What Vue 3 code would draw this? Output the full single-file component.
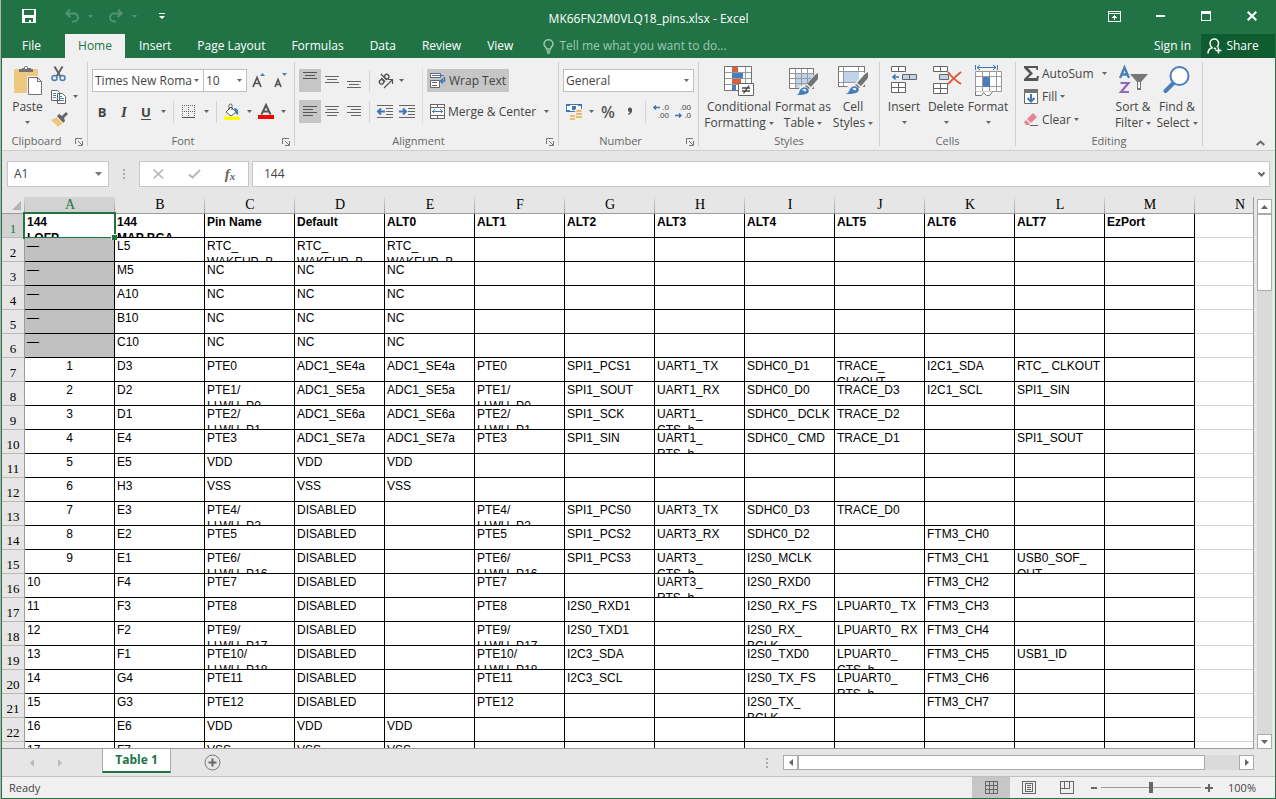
<script setup>
import { ref } from 'vue'

const tabs = ['Insert', 'Page Layout', 'Formulas', 'Data', 'Review', 'View']
const letters = 'ABCDEFGHIJKLMN'.split('')
const fontName = ref('Times New Roma')
const fontSize = ref('10')
const numberFormat = ref('General')
const cellName = ref('A1')
const formula = ref('144')
const zoom = ref(50)

const rows = [
  ['144\nLQFP', '144\nMAP BGA', 'Pin Name', 'Default', 'ALT0', 'ALT1', 'ALT2', 'ALT3', 'ALT4', 'ALT5', 'ALT6', 'ALT7', 'EzPort'],
  ['—', 'L5', 'RTC_\nWAKEUP_B', 'RTC_\nWAKEUP_B', 'RTC_\nWAKEUP_B'],
  ['—', 'M5', 'NC', 'NC', 'NC'],
  ['—', 'A10', 'NC', 'NC', 'NC'],
  ['—', 'B10', 'NC', 'NC', 'NC'],
  ['—', 'C10', 'NC', 'NC', 'NC'],
  ['1', 'D3', 'PTE0', 'ADC1_SE4a', 'ADC1_SE4a', 'PTE0', 'SPI1_PCS1', 'UART1_TX', 'SDHC0_D1', 'TRACE_\nCLKOUT', 'I2C1_SDA', 'RTC_ CLKOUT'],
  ['2', 'D2', 'PTE1/\nLLWU_P0', 'ADC1_SE5a', 'ADC1_SE5a', 'PTE1/\nLLWU_P0', 'SPI1_SOUT', 'UART1_RX', 'SDHC0_D0', 'TRACE_D3', 'I2C1_SCL', 'SPI1_SIN'],
  ['3', 'D1', 'PTE2/\nLLWU_P1', 'ADC1_SE6a', 'ADC1_SE6a', 'PTE2/\nLLWU_P1', 'SPI1_SCK', 'UART1_\nCTS_b', 'SDHC0_ DCLK', 'TRACE_D2'],
  ['4', 'E4', 'PTE3', 'ADC1_SE7a', 'ADC1_SE7a', 'PTE3', 'SPI1_SIN', 'UART1_\nRTS_b', 'SDHC0_ CMD', 'TRACE_D1', '', 'SPI1_SOUT'],
  ['5', 'E5', 'VDD', 'VDD', 'VDD'],
  ['6', 'H3', 'VSS', 'VSS', 'VSS'],
  ['7', 'E3', 'PTE4/\nLLWU_P2', 'DISABLED', '', 'PTE4/\nLLWU_P2', 'SPI1_PCS0', 'UART3_TX', 'SDHC0_D3', 'TRACE_D0'],
  ['8', 'E2', 'PTE5', 'DISABLED', '', 'PTE5', 'SPI1_PCS2', 'UART3_RX', 'SDHC0_D2', '', 'FTM3_CH0'],
  ['9', 'E1', 'PTE6/\nLLWU_P16', 'DISABLED', '', 'PTE6/\nLLWU_P16', 'SPI1_PCS3', 'UART3_\nCTS_b', 'I2S0_MCLK', '', 'FTM3_CH1', 'USB0_SOF_\nOUT'],
  ['10', 'F4', 'PTE7', 'DISABLED', '', 'PTE7', '', 'UART3_\nRTS_b', 'I2S0_RXD0', '', 'FTM3_CH2'],
  ['11', 'F3', 'PTE8', 'DISABLED', '', 'PTE8', 'I2S0_RXD1', '', 'I2S0_RX_FS', 'LPUART0_ TX', 'FTM3_CH3'],
  ['12', 'F2', 'PTE9/\nLLWU_P17', 'DISABLED', '', 'PTE9/\nLLWU_P17', 'I2S0_TXD1', '', 'I2S0_RX_\nBCLK', 'LPUART0_ RX', 'FTM3_CH4'],
  ['13', 'F1', 'PTE10/\nLLWU_P18', 'DISABLED', '', 'PTE10/\nLLWU_P18', 'I2C3_SDA', '', 'I2S0_TXD0', 'LPUART0_\nCTS_b', 'FTM3_CH5', 'USB1_ID'],
  ['14', 'G4', 'PTE11', 'DISABLED', '', 'PTE11', 'I2C3_SCL', '', 'I2S0_TX_FS', 'LPUART0_\nRTS_b', 'FTM3_CH6'],
  ['15', 'G3', 'PTE12', 'DISABLED', '', 'PTE12', '', '', 'I2S0_TX_\nBCLK', '', 'FTM3_CH7'],
  ['16', 'E6', 'VDD', 'VDD', 'VDD'],
  ['17', 'F7', 'VSS', 'VSS', 'VSS'],
]

function cellClass(r, c) {
  return {
    bold: r === 0,
    dim: c === 0 && r > 0 && r < 6,
    mid: c === 0 && r > 5 && r < 15,
    active: c === 0 && r === 0,
    plain: c === 13,
  }
}
</script>

<template>
  <div class="window">
    <header class="title">
      <div class="quick">
        <button class="q save" aria-label="Save">
          <svg width="14" height="14" shape-rendering="crispEdges"><path fill="#fff" fill-rule="evenodd" d="M0 0h14v14H0zM2 1h10v5H2zM3 9h8v4H9v-2H7v2H3z" /></svg>
        </button>
        <button class="q undo" aria-label="Undo">
          <svg width="14" height="14" fill="none" stroke="#529472" stroke-width="2"><path d="M5 .5L1.300 4.500 5.500 8M2 4.500h7a4 4 0 0 1 0 8H7" /></svg>
          <svg class="tri" width="5" height="3"><path fill="#529472" d="M0 0h5L2.500 3z" /></svg>
        </button>
        <button class="q redo" aria-label="Redo">
          <svg width="14" height="14" fill="none" stroke="#529472" stroke-width="2"><path d="M9 .5l3.700 4L8.500 8M12 4.500H5a4 4 0 0 0 0 8h2" /></svg>
          <svg class="tri" width="5" height="3"><path fill="#529472" d="M0 0h5L2.500 3z" /></svg>
        </button>
        <button class="q" aria-label="Customize Quick Access Toolbar">
          <svg width="6" height="7"><path fill="#fff" d="M0 0h6v1H0zM0 3h6L3 6z" /></svg>
        </button>
      </div>
      <h1>MK66FN2M0VLQ18_pins.xlsx - Excel</h1>
      <div class="winbtns">
        <button aria-label="Ribbon Display Options"><svg width="13" height="11" shape-rendering="crispEdges"><path fill="none" stroke="#fff" d="M.5.5h12v10H.5zM.5 2.500h12" /><path fill="#fff" d="M6 4h1v1h1v1h1v1H7v2H6V7H4V6h1V5h1z" /></svg></button>
        <button aria-label="Minimize"><svg width="9" height="2"><path fill="#fff" d="M0 0h9v2H0z" /></svg></button>
        <button aria-label="Maximize"><svg width="10" height="10" shape-rendering="crispEdges"><path fill="#fff" fill-rule="evenodd" d="M0 0h10v10H0zM1 3h8v6H1z" /></svg></button>
        <button aria-label="Close"><svg width="10" height="10"><path stroke="#fff" stroke-width="2" d="M.7.7l8.600 8.600M9.300.7L.7 9.300" /></svg></button>
      </div>
    </header>

    <nav class="tabs">
      <button class="file">File</button>
      <button class="home">Home</button>
      <button v-for="t in tabs" :key="t" class="tab">{{ t }}</button>
      <button class="tell">
        <svg width="11" height="15" fill="none" stroke="#9fc7b1" stroke-width="1.500"><path d="M3.500 10C3.500 8 1 7.500 1 5a4.500 4.300 0 0 1 9 0c0 2.500-2.500 3-2.500 5zM3.500 12h4M4 14h3" /></svg>
        Tell me what you want to do...
      </button>
      <span class="grow"></span>
      <button class="sign">Sign in</button>
      <button class="share">
        <svg width="15" height="16" fill="none" stroke="#fff" stroke-width="1.500"><path d="M1 15.500c0-3 1.500-5 4-5.700C3.500 8.500 3 7 3 5.300a4.300 4.300 0 0 1 8.600 0c0 1.700-.6 3-1.600 4M7 10l2 1M11.500 9.500v6M8.500 12.500h6" /></svg>
        Share
      </button>
    </nav>

    <section class="ribbon">
      <div class="group clip">
        <div class="body">
          <button class="big paste">
            <svg width="30" height="32">
              <path fill="#edc87e" d="M1 4h24v24H1z" /><path fill="#f0f0f0" d="M14 11h16v20H14z" />
              <path fill="#737373" d="M6 4h3V3h2a2 2 0 0 1 4 0h3v1h2v3H6z" /><path fill="#f0f0f0" d="M12 2h2v2h-2z" />
              <path fill="#fff" stroke="#737373" d="M15.500 12.500h9l4 4v13h-13zM24.500 12.500v4h4" />
            </svg>
            <span>Paste</span><svg class="tri" width="5" height="3"><path d="M0 0h5L2.500 3z" /></svg>
          </button>
          <div class="stack">
            <button aria-label="Cut"><svg width="16" height="16" fill="none"><path stroke="#636363" stroke-width="2" d="M3.500.5l6 10M11.500.5l-6 10" /><circle cx="3.500" cy="12" r="2.500" stroke="#4a7ebb" stroke-width="1.500" /><circle cx="11.500" cy="12" r="2.500" stroke="#4a7ebb" stroke-width="1.500" /></svg></button>
            <button aria-label="Copy"><svg width="16" height="14"><path fill="#fff" stroke="#666" d="M.5.5h6l2 2v8h-8zM6.500 3.500h5l3 3v7h-8z" /><path stroke="#4a7ebb" d="M2 3.500h3M2 5.500h3M2 7.500h3M8 6.500h3M8 8.500h5M8 10.500h5" /></svg><svg class="tri" width="5" height="3"><path d="M0 0h5L2.500 3z" /></svg></button>
            <button aria-label="Format Painter"><svg width="17" height="15"><path fill="#edc87e" d="M0 8l6-3 6 6-5 4z" /><path fill="#666" d="M6 4l2-2 3 2 4-4 2 2-4 4 1 3-2 2z" /><path stroke="#f0f0f0" d="M6 5l6 6" /></svg></button>
          </div>
        </div>
        <h2>Clipboard</h2>
        <button class="launch" aria-label="Clipboard settings"><svg width="8" height="8"><path fill="none" stroke="#777" d="M.5 6V.5H7M3 3l4 4M7.500 3v4.500H3" /></svg></button>
      </div>

      <div class="group font">
        <div class="body rows2">
          <div class="line">
            <span class="sel fname"><select v-model="fontName" aria-label="Font"><option>Times New Roma</option></select><svg class="tri" width="5" height="3"><path d="M0 0h5L2.500 3z" /></svg></span>
            <span class="sel fsize"><select v-model="fontSize" aria-label="Font size"><option>10</option></select><svg class="tri" width="5" height="3"><path d="M0 0h5L2.500 3z" /></svg></span>
            <button class="ib" aria-label="Increase font size"><svg width="13" height="15"><path fill="none" stroke="#555" stroke-width="1.700" d="M1 14L5 4.500 9 14M2.500 10.500h5" /><path fill="#4a7ebb" d="M8 3h5L10.500 0z" /></svg></button>
            <button class="ib" aria-label="Decrease font size"><svg width="13" height="15"><path fill="none" stroke="#555" stroke-width="1.600" d="M1 14l3-7.500L7 14M2 11.500h4" /><path fill="#4a7ebb" d="M8 0h5L10.500 3z" /></svg></button>
          </div>
          <div class="line">
            <button class="ib b">B</button><button class="ib i">I</button><button class="ib u">U</button>
            <button class="ar" aria-label="Underline styles"><svg class="tri" width="5" height="3"><path d="M0 0h5L2.500 3z" /></svg></button>
            <i class="sep"></i>
            <button class="ib" aria-label="Borders"><svg width="14" height="13" shape-rendering="crispEdges"><path fill="none" stroke="#666" stroke-dasharray="1 1" d="M0 .5h13M0 6.500h13M.5 0v12M6.500 0v12M12.500 0v12" /><path stroke="#555" d="M0 12.500h13" /></svg></button>
            <button class="ar" aria-label="Border styles"><svg class="tri" width="5" height="3"><path d="M0 0h5L2.500 3z" /></svg></button>
            <i class="sep"></i>
            <button class="ib" aria-label="Fill colour"><svg width="16" height="16"><path fill="#fff" stroke="#555" d="M2 8l5-5 5 5-5 4zM5 6V1.500a1.500 1.500 0 0 1 3 0V6" /><path fill="#4a7ebb" d="M10 4c4 0 5 3 4 7-2-1-3-2-3-3z" /><path fill="#ff0" d="M0 12.500h16V16H0z" /></svg></button>
            <button class="ar" aria-label="Fill colours"><svg class="tri" width="5" height="3"><path d="M0 0h5L2.500 3z" /></svg></button>
            <button class="ib" aria-label="Font colour"><svg width="16" height="15"><path fill="none" stroke="#555" stroke-width="2" d="M3.500 10.500L8 1l4.500 9.500M5 7.500h6" /><path fill="#f00" d="M0 11h16v4H0z" /></svg></button>
            <button class="ar" aria-label="Font colours"><svg class="tri" width="5" height="3"><path d="M0 0h5L2.500 3z" /></svg></button>
          </div>
        </div>
        <h2>Font</h2>
        <button class="launch" aria-label="Font settings"><svg width="8" height="8"><path fill="none" stroke="#777" d="M.5 6V.5H7M3 3l4 4M7.500 3v4.500H3" /></svg></button>
      </div>

      <div class="group align">
        <div class="body cols">
          <div class="rows2 left">
            <div class="line">
              <button class="ib on" aria-label="Top align"><svg width="14" height="17"><path stroke="#555" d="M0 .5h14M2 3.500h10M0 6.500h14" /></svg></button>
              <button class="ib" aria-label="Middle align"><svg width="14" height="17"><path stroke="#666" d="M0 4.500h14M2 7.500h10M0 10.500h14" /></svg></button>
              <button class="ib" aria-label="Bottom align"><svg width="14" height="17"><path stroke="#666" d="M0 9.500h14M2 12.500h10M0 15.500h14" /></svg></button>
              <i class="sep"></i>
              <button class="ib" aria-label="Orientation"><svg width="16" height="16" fill="none" stroke="#555" stroke-width="1.400"><g transform="rotate(-45 6 6)"><circle cx="3" cy="7" r="2.200" /><path d="M5.500 4v5.500M8 1v8.500" /><circle cx="10.300" cy="7" r="2.200" /></g><path stroke-width="1.200" d="M7 15l8-8M11 6.500h4.500V11" /></svg></button>
              <button class="ar" aria-label="Orientation options"><svg class="tri" width="5" height="3"><path d="M0 0h5L2.500 3z" /></svg></button>
            </div>
            <div class="line">
              <button class="ib on" aria-label="Align left"><svg width="14" height="13"><path stroke="#555" d="M0 1.500h14M0 4.500h10M0 7.500h14M0 10.500h10" /></svg></button>
              <button class="ib" aria-label="Center"><svg width="14" height="13"><path stroke="#666" d="M0 1.500h14M2 4.500h10M0 7.500h14M2 10.500h10" /></svg></button>
              <button class="ib" aria-label="Align right"><svg width="14" height="13"><path stroke="#666" d="M0 1.500h14M4 4.500h10M0 7.500h14M4 10.500h10" /></svg></button>
              <i class="sep"></i>
              <button class="ib" aria-label="Decrease indent"><svg width="16" height="13"><path stroke="#666" d="M0 .5h16M9 3.500h7M9 6.500h7M9 9.500h7M0 12.500h16" /><path fill="none" stroke="#3f77b5" stroke-width="2" d="M1 6.500h7M4 3.500l-3 3 3 3" /></svg></button>
              <button class="ib" aria-label="Increase indent"><svg width="16" height="13"><path stroke="#666" d="M0 .5h16M9 3.500h7M9 6.500h7M9 9.500h7M0 12.500h16" /><path fill="none" stroke="#3f77b5" stroke-width="2" d="M0 6.500h7M4 3.500l3 3-3 3" /></svg></button>
            </div>
          </div>
          <i class="tall"></i>
          <div class="rows2">
            <button class="wide on"><svg width="16" height="16"><path fill="#fff" stroke="#666" d="M.5.5h10v4H.5zM.5 7.500h9v7h-9z" /><path stroke="#3f77b5" d="M2 2.500h12" /><path stroke="#666" d="M2 9.500h5M2 12.500h5" /><path stroke="#3f77b5" d="M2 9.500h3" /><path fill="none" stroke="#3f77b5" stroke-width="1.500" d="M14.500 4v4H11M13 5.500L10.500 8l2.500 2.500" /></svg>Wrap Text</button>
            <button class="wide"><svg width="15" height="15" shape-rendering="crispEdges"><path fill="#fff" stroke="#666" d="M.5.5h14v14H.5zM.5 3.500h14M.5 11.500h14M7.500.5v3M7.500 11.500v3" /><path stroke="#3f77b5" fill="none" d="M2 7.500h11M4.500 5.500l-2 2 2 2M10.500 5.500l2 2-2 2" /></svg>Merge &amp; Center<svg class="tri far" width="5" height="3"><path d="M0 0h5L2.500 3z" /></svg></button>
          </div>
        </div>
        <h2>Alignment</h2>
        <button class="launch" aria-label="Alignment settings"><svg width="8" height="8"><path fill="none" stroke="#777" d="M.5 6V.5H7M3 3l4 4M7.500 3v4.500H3" /></svg></button>
      </div>

      <div class="group number">
        <div class="body rows2">
          <div class="line">
            <span class="sel nfmt"><select v-model="numberFormat" aria-label="Number format"><option>General</option></select><svg class="tri" width="5" height="3"><path d="M0 0h5L2.500 3z" /></svg></span>
          </div>
          <div class="line">
            <button class="ib" aria-label="Accounting format"><svg width="17" height="17"><path fill="#fff" stroke="#3f77b5" d="M.5 1.500h15v7H.5z" /><path fill="#3f77b5" d="M0 1h4v2H0zM12 1h4v2h-4zM6 3h4v4H6zM0 7h4v2H0z" /><path fill="#f0f0f0" d="M9 6h8v10H9zM3 10h8v7H3z" /><ellipse cx="13" cy="8" rx="3" ry="1.300" fill="#e9bd72" /><path stroke="#e9bd72" stroke-width="2" d="M10 11h6M10 14h6M4 13h5M4 16h5" /></svg></button>
            <button class="ar" aria-label="Accounting options"><svg class="tri" width="5" height="3"><path d="M0 0h5L2.500 3z" /></svg></button>
            <button class="ib pct">%</button>
            <button class="ib" aria-label="Comma style"><svg width="6" height="9"><path fill="#555" d="M1 3a2 2 0 0 1 4-1c.5 3-.8 5-3.500 6l-.5-1c1-.5 1.700-1 1.700-2C1.700 5 1 4 1 3z" /></svg></button>
            <i class="sep"></i>
            <button class="ib dec" aria-label="Increase decimal"><svg class="a1" width="7" height="5"><path fill="none" stroke="#3f77b5" stroke-width="1.500" d="M1 2.500h6M3 .5l-2 2 2 2" /></svg><span class="d1">.0</span><span class="d2">.00</span></button>
            <button class="ib dec" aria-label="Decrease decimal"><svg class="a2" width="7" height="5"><path fill="none" stroke="#3f77b5" stroke-width="1.500" d="M0 2.500h6M4 .5l2 2-2 2" /></svg><span class="d1">.00</span><span class="d2">.0</span></button>
          </div>
        </div>
        <h2>Number</h2>
        <button class="launch" aria-label="Number settings"><svg width="8" height="8"><path fill="none" stroke="#777" d="M.5 6V.5H7M3 3l4 4M7.500 3v4.500H3" /></svg></button>
      </div>

      <div class="group styles">
        <div class="body cols">
          <button class="big w72">
            <svg width="30" height="32"><path fill="#fff" stroke="#999" d="M.5 1.500h27v24H.5zM.5 7.500h27M.5 13.500h27M.5 19.500h27M8.500 1.500v24M21.500 1.500v24" /><path fill="none" stroke="#737373" d="M.5 1.500h27v24H.5z" /><path fill="#d9603b" d="M8 2h6v5H8zM8 14h9v5H8z" /><path fill="#4a7ebb" d="M8 8h11v5H8zM8 20h4v5H8z" /><path fill="#fff" stroke="#666" d="M14.500 18.500h15v12h-15z" /><path fill="none" stroke="#444" stroke-width="1.300" d="M18 23h8M18 26h8M25 20.500l-5.500 8" /></svg>
            <span>Conditional</span><span>Formatting<svg class="tri" width="5" height="3"><path d="M0 0h5L2.500 3z" /></svg></span>
          </button>
          <button class="big w56">
            <svg width="30" height="32"><path fill="#fff" stroke="#999" d="M1.500 3.500h24v20h-24z" /><path fill="#bfd2ea" d="M8 9h17v14H8z" /><path fill="none" stroke="#999" d="M1.500 8.500h24M1.500 13.500h24M1.500 18.500h24M7.500 3.500v20M13.500 3.500v20M19.500 3.500v20" /><path fill="none" stroke="#777" d="M1.500 3.500h24v20h-24z" /><path fill="#f0f0f0" d="M30 7v10L18 30H9l3-9 7-2L28 7z" /><path fill="#737373" d="M30 8v6l-7 8-4-3 8-9zM18 20l4 3-1 1-4-3z" /><path fill="#4a7ebb" d="M8 30c3 0 3-3 4-5s4-4 7-2 2 5-1 6-6 1-10 1z" /><path fill="#fff" d="M14 25c2-2 5-1 4 1-1 1-2-1-4-1z" /></svg>
            <span>Format as</span><span>Table<svg class="tri" width="5" height="3"><path d="M0 0h5L2.500 3z" /></svg></span>
          </button>
          <button class="big w44">
            <svg width="30" height="32"><path fill="#fff" stroke="#777" d="M.5 1.500h26v20H.5z" /><path fill="none" stroke="#999" d="M.5 6.500h26M.5 17.500h26M5.500 1.500v20M20.500 1.500v20" /><path fill="#bfd2ea" d="M6 7h15v10H6z" /><path fill="none" stroke="#777" d="M.5 1.500h26v20H.5z" /><path fill="#f0f0f0" d="M30 6v10L18 29H7l3-9 7-2L28 6z" /><path fill="#737373" d="M30 7v6l-7 8-4-3 8-9zM18 19l4 3-1 1-4-3z" /><path fill="#4a7ebb" d="M7 29c3 0 4-3 5-5s4-4 7-2 2 5-1 6-7 1-11 1z" /><path fill="#fff" d="M14 24c2-2 5-1 4 1-1 1-2-1-4-1z" /></svg>
            <span>Cell</span><span>Styles<svg class="tri" width="5" height="3"><path d="M0 0h5L2.500 3z" /></svg></span>
          </button>
        </div>
        <h2>Styles</h2>
      </div>

      <div class="group cells">
        <div class="body cols">
          <button class="big w40">
            <svg width="28" height="32"><path fill="#fff" stroke="#666" d="M1.500 1.500h14v5h-14zM8.500 1.500v5M1.500 17.500h14v10h-14zM8.500 17.500v10M1.500 22.500h14" /><path fill="#bfd2ea" stroke="#666" d="M12.500 9.500h14v5h-14zM19.500 9.500v5" /><path fill="none" stroke="#3f77b5" stroke-width="1.600" d="M3 12h6M5.500 9.500L3 12l2.500 2.500" /></svg>
            <span>Insert</span><svg class="tri" width="5" height="3"><path d="M0 0h5L2.500 3z" /></svg>
          </button>
          <button class="big w44">
            <svg width="30" height="32"><path fill="#fff" stroke="#666" d="M2.500 1.500h14v5h-14zM9.500 1.500v5M2.500 18.500h14v10h-14zM9.500 18.500v10M2.500 23.500h14" /><path fill="#bfd2ea" stroke="#666" d="M8.500 9.500h9v5h-9z" /><path fill="none" stroke="#d9603b" stroke-width="2" d="M17 7c3 4 8 9 13 12M30 7c-5 4-9 8-13 12" /></svg>
            <span>Delete</span><svg class="tri" width="5" height="3"><path d="M0 0h5L2.500 3z" /></svg>
          </button>
          <button class="big w40">
            <svg width="30" height="32"><path fill="none" stroke="#3f77b5" d="M2.500 0v5M24.500 0v5M4 2.500h19M7 0L4 2.500 7 5M20 0l3 2.500L20 5" /><path fill="#fff" stroke="#999" d="M2.500 6.500h26v20h-26zM2.500 11.500h26M2.500 21.500h26M9.500 6.500v20M16.500 6.500v20M23.500 6.500v20" /><path fill="#4a7ebb" d="M10 12h7v10h-7z" /><path fill="#fff" stroke="#777" d="M2.500 26.500v4h6l2-3 3 3h3l3-4" /></svg>
            <span>Format</span><svg class="tri" width="5" height="3"><path d="M0 0h5L2.500 3z" /></svg>
          </button>
        </div>
        <h2>Cells</h2>
      </div>

      <div class="group editing">
        <div class="body cols">
          <div class="stack edit">
            <button><svg width="15" height="15"><path fill="#555" d="M0 0h14v4h-1.500L12 2H4l5 5.500L4 12h8.500l.5-2H15l-1 5H0v-2l5.500-5.500L0 2z" /></svg>AutoSum<svg class="tri far" width="5" height="3"><path d="M0 0h5L2.500 3z" /></svg></button>
            <button><svg width="15" height="15"><path fill="#fff" stroke="#666" d="M.5.5h13v14H.5z" /><path fill="#737373" d="M0 0h14v4H0z" /><path fill="none" stroke="#3f77b5" stroke-width="2" d="M7 5v7M3.500 9L7 12.500 10.500 9" /></svg>Fill<svg class="tri" width="5" height="3"><path d="M0 0h5L2.500 3z" /></svg></button>
            <button><svg width="15" height="15"><path fill="#e8829a" d="M9 1l4 4-6 6-4-4zM2 8l4 4-1 1H2L0 10z" /><path stroke="#666" d="M6 13.500h8" /></svg>Clear<svg class="tri" width="5" height="3"><path d="M0 0h5L2.500 3z" /></svg></button>
          </div>
          <button class="big w44">
            <svg width="30" height="32" fill="none"><path stroke="#4a7ebb" stroke-width="2.300" d="M2 13L6.500 2.500 11 13M4 9.500h5.500" /><path stroke="#9265b5" stroke-width="2.200" d="M2.500 18h8L3 27h8" /><path fill="#777" d="M12 9h18l-7 8v8h-4v-8z" /><path fill="#fff" d="M20 17h2v6h-2z" /></svg>
            <span>Sort &amp;</span><span>Filter<svg class="tri" width="5" height="3"><path d="M0 0h5L2.500 3z" /></svg></span>
          </button>
          <button class="big w44">
            <svg width="30" height="32"><path stroke="#4a7ebb" stroke-width="4" stroke-linecap="round" d="M3.500 26l8-8" /><circle cx="17.500" cy="11" r="9" fill="#fff" stroke="#4a7ebb" stroke-width="2" /></svg>
            <span>Find &amp;</span><span>Select<svg class="tri" width="5" height="3"><path d="M0 0h5L2.500 3z" /></svg></span>
          </button>
        </div>
        <h2>Editing</h2>
      </div>
      <button class="collapse" aria-label="Collapse the Ribbon"><svg width="9" height="6"><path fill="none" stroke="#666" stroke-width="2" d="M.7 5l3.800-3.500L8.300 5" /></svg></button>
    </section>

    <section class="fbar">
      <div class="namebox"><input v-model="cellName" aria-label="Name box" /><svg width="7" height="4"><path fill="#777" d="M0 0h7L3.500 4z" /></svg></div>
      <svg class="dots" width="2" height="10"><path fill="#aaa" d="M0 0h2v2H0zM0 4h2v2H0zM0 8h2v2H0z" /></svg>
      <div class="fxbox">
        <button aria-label="Cancel"><svg width="11" height="10"><path stroke="#bbb" stroke-width="1.700" d="M.7.7l9.300 8.600M10 .7L.7 9.300" /></svg></button>
        <button aria-label="Enter"><svg width="13" height="10"><path fill="none" stroke="#bbb" stroke-width="2.200" d="M1 5.500l3.500 3L12 1" /></svg></button>
        <button class="fx" aria-label="Insert function">f<small>x</small></button>
      </div>
      <div class="formula"><input v-model="formula" aria-label="Formula bar" /><svg width="7" height="5"><path fill="none" stroke="#666" stroke-width="2" d="M.5.5l3 3 3-3" /></svg></div>
    </section>

    <main class="sheet">
      <div class="grid">
        <table>
          <colgroup><col class="rowcol" /><col v-for="n in 13" :key="n" class="datacol" /><col /></colgroup>
          <thead>
            <tr>
              <th class="corner"><svg width="9" height="9"><path fill="#b4b4b4" d="M9 0v9H0z" /></svg></th>
              <th v-for="(l, c) in letters" :key="l" scope="col" :class="{ cur: c === 0, last: c === 13 }">{{ l }}</th>
            </tr>
          </thead>
          <tbody>
            <tr v-for="(row, r) in rows" :key="r">
              <th scope="row" :class="{ cur: r === 0 }">{{ r + 1 }}</th>
              <td v-for="(l, c) in letters" :key="l" :class="cellClass(r, c)"><div>{{ row[c] }}</div><i v-if="!r && !c" class="handle"></i></td>
            </tr>
          </tbody>
        </table>
      </div>
      <div class="vscroll">
        <button aria-label="Scroll up"><svg width="7" height="4"><path fill="#666" d="M0 4h7L3.500 0z" /></svg></button>
        <div class="vthumb"></div>
        <span class="grow"></span>
        <button aria-label="Scroll down"><svg width="7" height="4"><path fill="#666" d="M0 0h7L3.500 4z" /></svg></button>
      </div>
    </main>

    <section class="sheets">
      <button class="nav" aria-label="Previous sheet"><svg width="4" height="8"><path fill="#bbb" d="M4 0v8L0 4z" /></svg></button>
      <button class="nav" aria-label="Next sheet"><svg width="4" height="8"><path fill="#bbb" d="M0 0v8l4-4z" /></svg></button>
      <button class="sheettab">Table 1</button>
      <button class="add" aria-label="New sheet"><svg width="17" height="17"><circle cx="8.500" cy="8.500" r="7.500" fill="none" stroke="#777" /><path stroke="#666" stroke-width="2" d="M4.500 8.500h8M8.500 4.500v8" /></svg></button>
      <span class="grow"></span>
      <svg class="hdots" width="2" height="10"><path fill="#aaa" d="M0 0h2v2H0zM0 4h2v2H0zM0 8h2v2H0z" /></svg>
      <div class="hscroll">
        <button aria-label="Scroll left"><svg width="4" height="7"><path fill="#666" d="M4 0v7L0 3.500z" /></svg></button>
        <div class="hthumb"></div>
        <span class="grow"></span>
        <button aria-label="Scroll right"><svg width="4" height="7"><path fill="#666" d="M0 0v7l4-3.500z" /></svg></button>
      </div>
    </section>

    <footer class="status">
      <span>Ready</span>
      <span class="grow"></span>
      <button class="view on" aria-label="Normal"><svg width="13" height="13" shape-rendering="crispEdges"><path fill="none" stroke="#666" d="M.5.5h12v12H.5zM.5 4.500h12M.5 8.500h12M4.500.5v12M8.500.5v12" /></svg></button>
      <button class="view" aria-label="Page Layout view"><svg width="14" height="13" shape-rendering="crispEdges"><path fill="none" stroke="#666" d="M.5.5h13v12H.5zM3.500 2.500h7v8h-7zM5 4.500h4M5 6.500h4M5 8.500h4" /></svg></button>
      <button class="view" aria-label="Page Break preview"><svg width="14" height="13" shape-rendering="crispEdges"><path fill="none" stroke="#666" d="M.5.5h13v12H.5zM4.500.5v7h5v-7M.5 7.500h4" /></svg></button>
      <button class="zb" aria-label="Zoom out"><svg width="6" height="2"><path fill="#666" d="M0 0h6v2H0z" /></svg></button>
      <input v-model="zoom" class="slider" type="range" min="0" max="100" aria-label="Zoom" />
      <button class="zb" aria-label="Zoom in"><svg width="8" height="8"><path fill="#666" d="M3 0h2v3h3v2H5v3H3V5H0V3h3z" /></svg></button>
      <button class="pctz">100%</button>
    </footer>
  </div>
</template>

<style>
body { margin: 0; background: #b4b4b4; overflow: hidden; }
</style>

<style scoped>
* { box-sizing: border-box; }
.window {
  display: flex; flex-direction: column; height: 100vh; margin-left: 1px;
  border: 1px solid #217346; border-top: 0; background: #e6e6e6;
  font: 12px/16px "Open Sans", "Noto Sans", sans-serif; color: #444;
}
button { padding: 0; border: 0; background: none; font: inherit; color: inherit; display: flex; align-items: center; justify-content: center; }
input, select { font: inherit; color: inherit; border: 0; background: none; outline: 0; padding: 0; margin: 0; appearance: none; min-width: 0; }
svg { flex: none; display: block; overflow: visible; }
.tri { fill: #666; }
.grow { flex: 1; }

.title { display: flex; align-items: stretch; height: 34px; background: #217346; color: #fff; position: relative; flex: none; }
.quick { display: flex; flex: 1; padding-left: 20px; }
.q { height: 32px; gap: 9px; }
.q.save { margin-right: 29px; }
.q.undo { margin-right: 16px; }
.q.redo { margin-right: 22px; }
h1 { margin: 0; font-size: 12px; font-weight: 400; line-height: 38px; }
.winbtns { display: flex; flex: 1; justify-content: flex-end; }
.winbtns button { width: 46px; height: 32px; }

.tabs { display: flex; height: 24px; background: #217346; color: #fff; flex: none; }
.file { width: 59px; margin-right: 4px; }
.home { width: 60px; margin-right: 1px; background: #f0f0f0; color: #217346; }
.tab { padding: 0 13px; }
.tell { gap: 5px; margin-left: 17px; color: #9fc7b1; }
.sign { margin-right: 10px; }
.share { width: 74px; gap: 4px; background: #0e5c2f; padding-right: 10px; }

.ribbon { display: flex; flex: none; height: 93px; padding: 4px 0; background: #f0f0f0; border-bottom: 1px solid #cfcfcf; }
.group { display: flex; flex-direction: column; border-right: 1px solid #d0d0d0; height: 84px; position: relative; }
.body { flex: 1; display: flex; }
h2 { margin: 0; font-size: 11px; line-height: 16px; font-weight: 400; text-align: center; color: #666; height: 13px; }
.launch { position: absolute; right: 4px; bottom: 0; width: 8px; height: 8px; }
.clip { width: 86px; }
.clip h2 { padding-right: 16px; }
.font { width: 207px; }
.font h2, .align h2, .number h2 { padding-right: 16px; }
.align { width: 264px; }
.number { width: 140px; }
.styles { width: 181px; }
.cells { width: 136px; }
.editing { width: 187px; }
.rows2 { display: flex; flex-direction: column; gap: 8px; padding: 7px 0 0 4px; }
.font .rows2 { padding-left: 3px; }
.cols { display: flex; }
.left { width: 127px; }
.line { display: flex; height: 23px; align-items: center; }
.ib { width: 22px; height: 23px; flex: none; }
.on { background: #c6c6c6; }
.ar { width: 10px; height: 23px; flex: none; }
.font .ar, .number .ar { width: 12px; }
.sep { width: 1px; height: 22px; background: #d4d4d4; margin: 0 4px; flex: none; }
.font .sep { margin-left: 4px; }
.tall { width: 1px; height: 56px; margin-top: 6px; background: #dcdcdc; }
.b, .i, .u { font-size: 13px; font-weight: 700; }
.i { font-style: italic; font-family: "Liberation Serif", serif; font-size: 15px; }
.u { text-decoration: underline; text-underline-offset: 2px; }
.pct { font-size: 16px; font-weight: 600; color: #555; }
.sel { display: flex; align-items: center; position: relative; height: 23px; background: #fff; border: 1px solid #c0c0c0; }
.sel select { flex: 1; width: 100%; height: 21px; padding: 0 10px 0 2px; }
.sel .tri { position: absolute; right: 4px; top: 9px; }
.fname { width: 112px; margin-left: 1px; }
.fsize { width: 43px; border-left: 0; }
.nfmt { width: 131px; }
.wide { height: 23px; justify-content: flex-start; gap: 3px; padding: 0 3px; align-self: flex-start; white-space: nowrap; }
.wide .far { margin-left: 5px; }
.dec { display: grid; grid-template-columns: repeat(2, 8px); grid-template-rows: 8px 8px; align-content: center; justify-content: center; font: 8px/8px "Liberation Sans", sans-serif; align-items: center; justify-items: end; }
.dec .a1, .dec .d1 { grid-row: 1; }
.dec .a2, .dec .d2 { grid-row: 2; }
.dec .a1, .dec .a2 { grid-column: 1; justify-self: start; }
.dec .d1, .dec .d2 { grid-column: 2; }
.big { flex-direction: column; justify-content: flex-start; padding-top: 3px; white-space: nowrap; }
.big span { display: flex; align-items: center; gap: 3px; height: 16px; }
.big > svg:first-child { margin-bottom: 2px; }
.big > .tri { margin-top: 6px; }
.paste { width: 44px; padding-left: 7px; margin-right: 5px; }
.stack { display: flex; flex-direction: column; }
.stack button { height: 23px; gap: 6px; justify-content: flex-start; }
.styles .body { padding-left: 4px; }
.cells .body { padding-left: 4px; }
.w72 { width: 72px; }
.w56 { width: 56px; }
.w44 { width: 44px; }
.w40 { width: 40px; }
.edit { width: 95px; padding-left: 8px; }
.edit button { gap: 3px; }
.edit .far { margin-left: 5px; }
.collapse { margin: 76px 10px 0 auto; height: 10px; }

.fbar { display: flex; flex: none; height: 46px; padding: 10px 5px; align-items: center; }
.namebox, .formula, .fxbox { display: flex; align-items: center; height: 26px; background: #fff; border: 1px solid #c6c6c6; }
.namebox { width: 102px; padding: 0 6px; }
.namebox input, .formula input { flex: 1; }
.dots { margin: 0 14px; }
.fxbox { width: 110px; margin-right: 3px; }
.fxbox button { width: 36px; height: 24px; }
.fxbox .fx { font: italic 700 15px "Liberation Serif", serif; color: #666; }
.fx small { font-size: 11px; padding-top: 3px; }
.formula { flex: 1; padding: 0 4px 0 11px; }

.sheet { display: flex; flex: 1; min-height: 0; }
.grid { flex: 1; min-width: 0; overflow: hidden; border-right: 1px solid #9c9c9c; border-bottom: 1px solid #9c9c9c; margin-right: 3px; }
table { table-layout: fixed; width: 100%; border-collapse: separate; border-spacing: 0; font: 12px/16px "Liberation Sans", Arial, sans-serif; color: #000; background: #fff; }
.rowcol { width: 23px; }
.datacol { width: 90px; }
th, td { padding: 0; text-align: left; vertical-align: top; }
thead th { height: 17px; background: linear-gradient(#d8d8d8, #9c9c9c) right / 1px 100% no-repeat #e6e6e6; border-bottom: 1px solid #9c9c9c; font: 14px/16px "Liberation Serif", serif; text-align: center; }
thead th.corner svg { margin: 4px 0 0 10px; }
thead th.cur { background-color: #d2d2d2; border-bottom-color: #217346; color: #217346; }
thead th.last { background: #e6e6e6; padding-left: 32px; }
tbody th { height: 24px; border-right: 1px solid #9c9c9c; border-bottom: 1px solid #b8b8b8; background: #e6e6e6; font: 13px/16px "Liberation Serif", serif; text-align: center; vertical-align: bottom; }
tbody th.cur { background: #d2d2d2; color: #217346; }
td { height: 24px; border-right: 1px solid #000; border-bottom: 1px solid #000; position: relative; }
td div { height: 23px; overflow: hidden; padding-left: 2px; white-space: pre; }
td.bold { font-weight: 700; }
td.dim { background: #c0c0c0; }
td.mid { text-align: center; }
td.mid div { padding: 0; }
td.plain { border-right: 0; border-bottom-color: #d4d4d4; }
td.active::after { content: ""; position: absolute; inset: -2px; border: 2px solid #217346; }
.handle { position: absolute; right: -3px; bottom: -3px; width: 6px; height: 6px; background: #217346; border: 1px solid #fff; border-width: 1px 0 0 1px; z-index: 2; }

.vscroll { display: flex; flex-direction: column; width: 15px; margin: 2px 3px 0 0; background: #dadada; }
.vscroll button, .hscroll button { width: 15px; height: 15px; background: #fff; border: 1px solid #ababab; flex: none; }
.vthumb { height: 77px; background: #fff; border: 1px solid #ababab; }

.sheets { display: flex; flex: none; height: 28px; align-items: center; border-bottom: 1px solid #c0c0c0; padding-right: 21px; }
.nav { width: 28px; height: 24px; }
.nav:first-child { margin-left: 16px; }
.sheettab { align-self: flex-start; height: 24px; width: 69px; margin-left: 28px; background: #fff; border-right: 1px solid #ababab; border-left: 1px solid #ababab; border-bottom: 2px solid #217346; color: #217346; font-weight: 700; }
.add { margin-left: 33px; height: 26px; }
.hdots { margin-right: 15px; }
.hscroll { display: flex; width: 471px; background: #dadada; height: 15px; }
.hthumb { width: 407px; background: #fff; border: 1px solid #ababab; }

.status { display: flex; flex: none; align-items: center; height: 21px; background: #f0f0f0; padding: 0 19px 0 7px; font-size: 11px; }
.view { width: 38px; height: 21px; }
.zb { width: 15px; height: 20px; }
.slider { width: 100px; height: 16px; }
.slider::-webkit-slider-runnable-track { height: 11px; background: linear-gradient(#999, #999) center / 100% 1px no-repeat; }
.slider::-webkit-slider-thumb { appearance: none; width: 4px; height: 11px; background: #666; }
.pctz { margin-left: 12px; }
</style>
